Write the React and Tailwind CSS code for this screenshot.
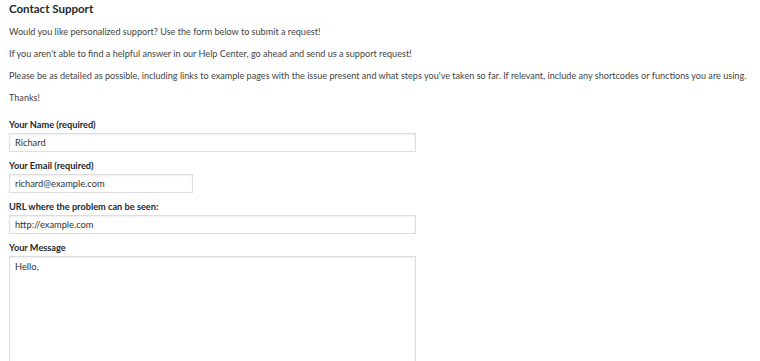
const inputCls =
  "border border-[#dddddd] shadow-[inset_0_1px_2px_rgba(0,0,0,0.07)] bg-white px-[5px] text-[9.3px] text-[#333] flex items-center";
const labelCls = "text-[9.2px] font-bold text-[#23282d] leading-[14px]";

export default function App() {
  const font = { fontFamily: 'Lato, "Open Sans", sans-serif' };
  return (
    <div className="w-[760px] h-[361px] overflow-hidden bg-white text-[#444]" style={font}>
      <div className="pl-[9px]">
        <h2 className="text-[11.5px] font-bold text-[#23282d] leading-[18px] m-0">Contact Support</h2>
        <div className="text-[9.1px] leading-[22px] mt-[3px] whitespace-nowrap">
          <p>Would you like personalized support? Use the form below to submit a request!</p>
          <p>If you aren't able to find a helpful answer in our Help Center, go ahead and send us a support request!</p>
          <p>Please be as detailed as possible, including links to example pages with the issue present and what steps you've taken so far. If relevant, include any shortcodes or functions you are using.</p>
          <p>Thanks!</p>
        </div>
        <form className="mt-[9px] flex flex-col">
          <label className={labelCls}>Your Name (required)</label>
          <div className={`mt-[1px] w-[407px] h-[19px] ${inputCls}`}>Richard</div>
          <label className={`mt-[7px] ${labelCls}`}>Your Email (required)</label>
          <div className={`mt-[1px] w-[184px] h-[19px] ${inputCls}`}>richard@example.com</div>
          <label className={`mt-[7px] ${labelCls}`}>URL where the problem can be seen:</label>
          <div className={`mt-[1px] w-[407px] h-[19px] ${inputCls}`}>http://example.com</div>
          <label className={`mt-[7px] ${labelCls}`}>Your Message</label>
          <div className="mt-[1px] w-[407px] h-[150px] border border-[#dddddd] shadow-[inset_0_1px_2px_rgba(0,0,0,0.07)] px-[5px] pt-[3px] text-[9.3px] leading-[14px] text-[#333]">
            Hello,
          </div>
        </form>
      </div>
    </div>
  );
}
